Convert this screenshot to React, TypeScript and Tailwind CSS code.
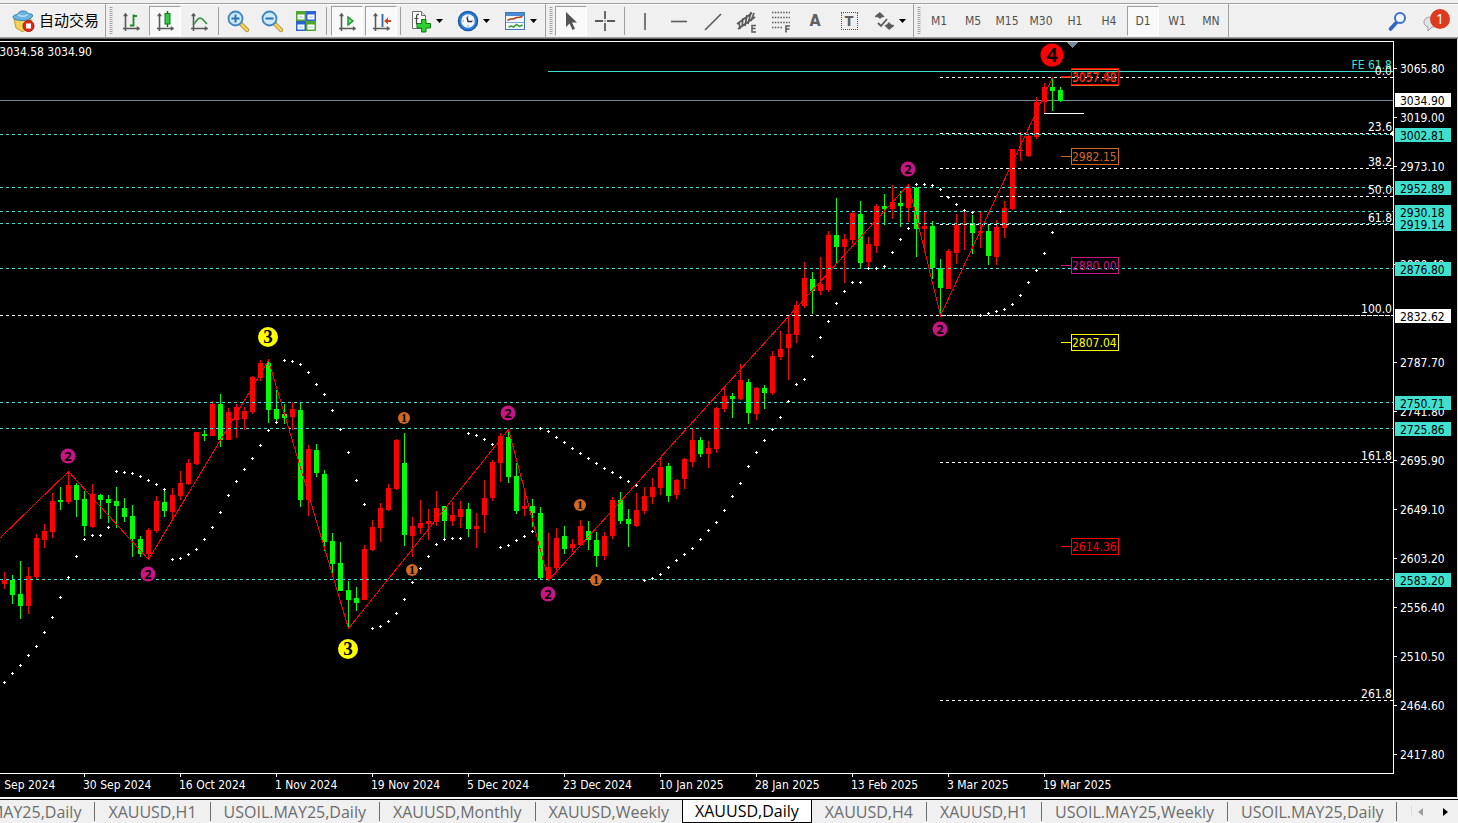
import React from 'react';
import clsx from 'clsx';

type Side = 'u' | 'd';
// high, body top, body bottom, low, direction, parabolic SAR
type Bar = [number, number, number, number, Side, number];

const BARS: Bar[] = [
    [572, 580, 584, 589, 'u', 682], [575, 580, 595, 604, 'd', 673], [561, 594, 606, 619, 'd', 665], [567, 576, 606, 614, 'u', 655],
    [534, 538, 577, 579, 'u', 646], [524, 531, 540, 548, 'u', 632], [493, 501, 532, 538, 'u', 617], [487, 500, 502, 510, 'd', 597],
    [471, 485, 502, 504, 'u', 577], [483, 485, 500, 517, 'd', 556], [491, 499, 526, 536, 'd', 539], [484, 494, 527, 528, 'u', 535],
    [494, 495, 500, 519, 'd', 535], [495, 499, 503, 523, 'd', 527], [487, 501, 506, 528, 'd', 471], [498, 508, 517, 522, 'd', 472],
    [505, 516, 539, 557, 'd', 473], [536, 539, 554, 557, 'd', 476], [528, 530, 554, 559, 'u', 480], [496, 501, 531, 533, 'u', 484],
    [490, 502, 511, 517, 'd', 489], [488, 495, 512, 521, 'u', 559], [471, 483, 496, 500, 'u', 558], [459, 463, 484, 485, 'u', 554],
    [432, 432, 464, 465, 'u', 549], [430, 434, 436, 441, 'd', 539], [401, 404, 436, 436, 'u', 527], [394, 404, 440, 447, 'd', 512],
    [408, 412, 440, 440, 'u', 495], [404, 407, 420, 438, 'u', 481], [407, 411, 419, 430, 'u', 469], [376, 377, 412, 414, 'u', 458],
    [360, 363, 378, 381, 'u', 445], [361, 363, 410, 423, 'd', 430], [390, 409, 419, 424, 'd', 422], [404, 414, 418, 424, 'd', 360],
    [402, 409, 417, 430, 'u', 361], [402, 410, 500, 507, 'd', 364], [445, 449, 500, 516, 'u', 372], [444, 450, 473, 477, 'd', 384],
    [470, 474, 542, 551, 'd', 394], [533, 541, 564, 573, 'd', 410], [542, 563, 591, 591, 'd', 429], [581, 590, 600, 628, 'd', 452],
    [587, 598, 603, 611, 'd', 480], [545, 549, 600, 600, 'u', 504], [520, 527, 550, 551, 'u', 628], [503, 508, 528, 542, 'u', 626],
    [484, 488, 510, 511, 'u', 621], [439, 440, 489, 490, 'u', 613], [433, 463, 535, 546, 'd', 599], [517, 526, 536, 557, 'u', 582],
    [500, 523, 528, 534, 'u', 568], [509, 521, 524, 540, 'u', 556], [491, 508, 522, 526, 'u', 544], [506, 506, 521, 539, 'd', 539],
    [502, 515, 521, 526, 'u', 538], [501, 509, 517, 528, 'u', 538], [503, 509, 529, 537, 'd', 433], [513, 526, 529, 548, 'u', 435],
    [480, 498, 515, 533, 'u', 439], [460, 462, 498, 501, 'u', 444], [433, 436, 463, 482, 'u', 547], [429, 437, 477, 483, 'd', 545],
    [463, 476, 511, 514, 'd', 540], [488, 506, 509, 516, 'u', 536], [499, 506, 513, 527, 'd', 531], [507, 513, 578, 579, 'd', 428],
    [533, 567, 579, 580, 'u', 431], [528, 538, 568, 573, 'u', 437], [526, 536, 549, 554, 'd', 442], [539, 544, 548, 552, 'u', 448],
    [520, 526, 545, 546, 'u', 453], [521, 531, 540, 550, 'd', 458], [532, 540, 556, 567, 'd', 463], [532, 536, 556, 560, 'u', 468],
    [497, 500, 536, 539, 'u', 472], [492, 500, 521, 524, 'd', 477], [509, 519, 524, 547, 'd', 481], [493, 510, 526, 527, 'u', 485],
    [487, 496, 511, 514, 'u', 580], [478, 487, 497, 504, 'u', 578], [457, 467, 488, 495, 'u', 574], [463, 466, 496, 502, 'd', 567],
    [479, 480, 495, 499, 'u', 560], [458, 459, 479, 489, 'u', 554], [429, 440, 462, 467, 'u', 548], [437, 440, 454, 457, 'd', 539],
    [441, 448, 454, 468, 'u', 530], [407, 408, 449, 453, 'u', 522], [388, 396, 409, 412, 'u', 510], [393, 396, 399, 418, 'd', 496],
    [364, 380, 399, 400, 'u', 483], [379, 382, 413, 424, 'd', 466], [387, 388, 414, 420, 'u', 452], [385, 388, 393, 409, 'd', 440],
    [351, 356, 393, 395, 'u', 429], [331, 349, 357, 360, 'u', 417], [315, 334, 348, 380, 'u', 401], [301, 305, 335, 343, 'u', 384],
    [262, 278, 306, 308, 'u', 379], [272, 279, 291, 314, 'd', 356], [257, 284, 291, 295, 'u', 337], [231, 235, 290, 292, 'u', 321],
    [198, 235, 247, 263, 'd', 303], [234, 239, 247, 283, 'u', 291], [212, 213, 240, 244, 'u', 282], [201, 214, 263, 268, 'd', 282],
    [237, 244, 262, 269, 'u', 268], [204, 206, 246, 253, 'u', 268], [194, 206, 209, 225, 'd', 266], [185, 202, 209, 219, 'u', 252],
    [191, 203, 206, 227, 'd', 239], [184, 188, 208, 222, 'u', 228], [187, 188, 229, 257, 'd', 184], [212, 226, 229, 253, 'u', 184],
    [221, 226, 268, 279, 'd', 185], [259, 268, 288, 315, 'd', 189], [249, 251, 289, 289, 'u', 197], [214, 225, 253, 264, 'u', 204],
    [210, 224, 225, 250, 'u', 210], [215, 223, 233, 254, 'd', 212], [212, 231, 233, 248, 'u', 315], [225, 231, 256, 265, 'd', 313],
    [220, 227, 257, 265, 'u', 311], [201, 208, 228, 238, 'u', 309], [149, 149, 209, 210, 'u', 304], [132, 150, 151, 161, 'u', 295],
    [135, 136, 156, 157, 'u', 282], [97, 102, 137, 139, 'u', 270], [83, 87, 102, 113, 'u', 253], [79, 87, 91, 111, 'd', 232],
    [87, 90, 101, 102, 'd', 211],
];

const ZIGZAG = '-1,538 68,471 148,559 268,360 348,628 508,429 548,580 908,184 940,315 1052,77';

const TEAL_LEVELS = [134, 187, 211, 223, 268, 402, 428, 579];

const FIBS: [number, string][] = [
    [77, '0.0'], [133, '23.6'], [168, '38.2'], [196, '50.0'], [224, '61.8'], [315, '100.0'], [462, '161.8'], [700, '261.8'],
];

const TARGETS: [number, string, string][] = [
    [77, '3057.48', '#d2691e'],
    [76, '3057.62', '#ff0000'],
    [156, '2982.15', '#d2691e'],
    [265, '2880.00', '#c71585'],
    [342, '2807.04', '#ffff00'],
    [546, '2614.36', '#ff0000'],
];

// x, y, wave degree
const WAVES: [number, number, number][] = [
    [68, 456, 2], [148, 574, 2], [508, 413, 2], [548, 594, 2], [908, 169, 2], [940, 329, 2],
    [268, 337, 3], [348, 649, 3], [1052, 55, 4],
    [404, 418, 1], [412, 570, 1], [580, 505, 1], [596, 580, 1],
];

const SANS = "font-['Noto_Sans',sans-serif] font-bold";
const SERIF = "font-['Liberation_Serif',serif] font-bold";

const WAVE_STYLE: Record<number, { r: number; fill: string; size: number; dy: number; font: string }> = {
    1: { r: 6, fill: '#d2691e', size: 12, dy: 4, font: SERIF },
    2: { r: 7.5, fill: '#c71585', size: 13, dy: 5, font: SANS },
    3: { r: 10, fill: '#ffff00', size: 19, dy: 6, font: SERIF },
    4: { r: 11.5, fill: '#ff0000', size: 20, dy: 7, font: SANS },
};

const PRICES: [number, string][] = [
    [69, '3065.80'], [118, '3019.00'], [167, '2973.10'], [265, '2880.40'], [363, '2787.70'], [412, '2741.80'], [461, '2695.90'],
    [510, '2649.10'], [559, '2603.20'], [608, '2556.40'], [657, '2510.50'], [706, '2464.60'], [755, '2417.80'],
];

const TAGS: [number, string, string][] = [
    [100, '3034.90', '#ffffff'], [135, '3002.81', '#40e0d0'], [188, '2952.89', '#40e0d0'], [212, '2930.18', '#40e0d0'],
    [224, '2919.14', '#40e0d0'], [269, '2876.80', '#40e0d0'], [316, '2832.62', '#ffffff'], [403, '2750.71', '#40e0d0'],
    [429, '2725.86', '#40e0d0'], [580, '2583.20', '#40e0d0'],
];

const DATES = [
    '12 Sep 2024', '30 Sep 2024', '16 Oct 2024', '1 Nov 2024', '19 Nov 2024', '5 Dec 2024', '23 Dec 2024', '10 Jan 2025',
    '28 Jan 2025', '13 Feb 2025', '3 Mar 2025', '19 Mar 2025',
];

const TABS = [
    'USOIL.MAY25,Daily', 'XAUUSD,H1', 'USOIL.MAY25,Daily', 'XAUUSD,Monthly', 'XAUUSD,Weekly', 'XAUUSD,Daily', 'XAUUSD,H4',
    'XAUUSD,H1', 'USOIL.MAY25,Weekly', 'USOIL.MAY25,Daily', 'USOIL.MAY25,H4',
];
const ACTIVE_TAB = 5;

const TIMEFRAMES = ['M1', 'M5', 'M15', 'M30', 'H1', 'H4', 'D1', 'W1', 'MN'];

/* ---------- toolbar icons ---------- */

function Icon({ children }: { children: React.ReactNode }) {
    return (
        <svg width="24" height="24" viewBox="0 0 24 24" fill="none" className="shrink-0">
            {children}
        </svg>
    );
}

function Axes() {
    return (
        <g stroke="#5a5a5a">
            <path d="M6.5 5v17M4 19.500h16" strokeWidth="1.600" />
            <path d="M4.500 7l2-3 2 3zM18 17.500l3 2-3 2z" fill="#5a5a5a" strokeWidth="0.500" />
        </g>
    );
}

const BarChartIcon = () => (
    <Icon>
        <Axes />
        <path d="M14.500 5.500v12M11 16.500h3.500M14.500 7h3.500" stroke="#1f8a2b" strokeWidth="1.800" />
    </Icon>
);

const CandleIcon = () => (
    <Icon>
        <Axes />
        <path d="M14.500 2v16" stroke="#0a6b16" strokeWidth="1.400" />
        <rect x="12" y="4.500" width="5" height="10.500" fill="#35c845" stroke="#0d7a1c" />
    </Icon>
);

const LineChartIcon = () => (
    <Icon>
        <Axes />
        <path d="M6 16c3-2 4-7 7-7 2.500 0 4 3 7 6" stroke="#2f8f3a" strokeWidth="1.600" />
    </Icon>
);

function ZoomIcon({ plus }: { plus?: boolean }) {
    return (
        <Icon>
            <path d="M15 15l6 6" stroke="#a98a3a" strokeWidth="4.200" strokeLinecap="round" />
            <path d="M15.500 15.500l5.500 5.500" stroke="#f7d257" strokeWidth="2.600" strokeLinecap="round" />
            <circle cx="9.500" cy="9.500" r="7" fill="#cfe8fb" stroke="#3d86c4" strokeWidth="1.800" />
            <path d="M5.500 9.500h8" stroke="#2b74b4" strokeWidth="2" />
            {plus && <path d="M9.500 5.500v8" stroke="#2b74b4" strokeWidth="2" />}
        </Icon>
    );
}

const TileIcon = () => (
    <Icon>
        <rect x="2" y="2" width="10" height="10" fill="#4fa62f" />
        <rect x="12" y="2" width="10" height="10" fill="#2d62cf" />
        <rect x="2" y="12" width="10" height="10" fill="#2d62cf" />
        <rect x="12" y="12" width="10" height="10" fill="#4fa62f" />
        <path d="M3.500 5.500h7v5h-7zM13.500 5.500h7v5h-7zM3.500 15.500h7v5h-7zM13.500 15.500h7v5h-7z" fill="#fff" />
        <path d="M5 8h4M15 8h4M5 18h4M15 18h4" stroke="#9cc0e6" />
    </Icon>
);

const AutoScrollIcon = () => (
    <Icon>
        <Axes />
        <path d="M13 8v8l5-4z" fill="#7be07f" stroke="#17962a" strokeWidth="1.400" />
    </Icon>
);

const ShiftIcon = () => (
    <Icon>
        <Axes />
        <path d="M13.500 5v13" stroke="#2a6aa8" strokeWidth="1.800" />
        <path d="M15 12l4-3.500v2.500h3v2h-3v2.500z" fill="#d5441a" />
    </Icon>
);

const IndicatorIcon = () => (
    <Icon>
        <path d="M3.500 2.500h9l4 4v13h-13z" fill="#fafafa" stroke="#707070" />
        <path d="M12.500 2.500v4h4" stroke="#707070" fill="#ddd" />
        <path d="M10 5.500c-2.500-.5-2.500 1-2.500 3v7M5.500 9.500h4" stroke="#444" strokeWidth="1.200" />
        <path d="M12.500 10.500h4.500v4h4.500v4.500h-4.500v4h-4.500v-4h-4.500v-4.500h4.500z" fill="#2fcf2f" stroke="#0d7a16" />
    </Icon>
);

const ClockIcon = () => (
    <Icon>
        <circle cx="12" cy="12" r="9.500" fill="#2f7fdc" stroke="#1c56a8" strokeWidth="1.500" />
        <circle cx="12" cy="12" r="6.800" fill="#f4f7fb" />
        <path d="M12 6.500v1.500M12 16v1.500M6.500 12h1.500M16 12h1.500" stroke="#888" />
        <path d="M11 8l1 4.500h4" stroke="#333" strokeWidth="1.400" />
    </Icon>
);

const TemplateIcon = () => (
    <Icon>
        <rect x="2.500" y="3.500" width="19" height="17" fill="#f6f9fc" stroke="#3f77b8" />
        <path d="M3 4h18v3h-18z" fill="#4b8bd4" />
        <path d="M3 13.500h18" stroke="#7aa3d0" />
        <path d="M4.500 11.500l3-1.500h3l3-1.500h2l4-1" stroke="#b03a1c" strokeWidth="1.500" />
        <path d="M5.500 18l3-1 2 1 3-2.500 3 2 3-1.500" stroke="#2c9a35" strokeWidth="1.500" />
    </Icon>
);

const CursorIcon = () => (
    <Icon>
        <path d="M7 3v15l3.500-3.500 3 6.500 2.500-1.200-3-6.300h5z" fill="#555" />
    </Icon>
);

const CrosshairIcon = () => (
    <Icon>
        <path d="M12 2v8M12 14v8M2 12h8M14 12h8M12 11.500v1" stroke="#5a5a5a" strokeWidth="1.800" />
    </Icon>
);

const VLineIcon = () => (
    <Icon>
        <path d="M12 4v17" stroke="#5a5a5a" strokeWidth="1.600" />
    </Icon>
);

const HLineIcon = () => (
    <Icon>
        <path d="M4 12.500h16" stroke="#5a5a5a" strokeWidth="1.600" />
    </Icon>
);

const TrendIcon = () => (
    <Icon>
        <path d="M4 21L20 5" stroke="#5a5a5a" strokeWidth="1.600" />
    </Icon>
);

const ChannelIcon = () => (
    <Icon>
        <path d="M2 15L17 4M3 20L20 8M4 13l1 7M8 9l-1 9M12 6l-2 11M16 3l-3 12M19 4l-3 8" stroke="#5a5a5a" strokeWidth="1.700" />
        <path d="M21 16.500h-4v6.500h4M17 19.500h3.500" stroke="#5a5a5a" strokeWidth="1.500" />
    </Icon>
);

const FiboIcon = () => (
    <Icon>
        <path d="M3 3.500h18M3 8.500h18M3 13.500h18M3 18.500h11" stroke="#5a5a5a" strokeWidth="1.500" strokeDasharray="1.500 1.300" />
        <path d="M21 17h-4v6.500M17 20h3.500" stroke="#5a5a5a" strokeWidth="1.600" />
    </Icon>
);

const ShapesIcon = () => (
    <Icon>
        <path d="M8 3.500l4 4-2.500.5-1.500 1.500-1.500-1.500-3.500-.5zM17 20.500l-4-4 2-.5 2-2.500 2 2.500 3 .5z" fill="#5a5a5a" stroke="#5a5a5a" />
        <path d="M6 14l3 3 6-7" stroke="#5a5a5a" strokeWidth="1.800" />
    </Icon>
);

const ExpertIcon = () => (
    <Icon>
        <path d="M3 10l2 9 6 3.500 7-2 3-9.500z" fill="#f3d258" stroke="#c29a28" />
        <path d="M2 8c0-2 4-2.500 5-3 1-2.500 3-3 5-3s4 .5 5 2.500c2 .5 4 0 4.500 1.500.5 3-4 5.500-9.500 5.500s-10-1-10-3.500z" fill="#6cb4e0" stroke="#3b83b5" />
        <path d="M7 6c3 1.500 7 1.500 10-.5" stroke="#b8def5" strokeWidth="1.500" />
        <circle cx="17.500" cy="17" r="5.500" fill="#dd2a1b" stroke="#a8180c" />
        <rect x="15" y="14.500" width="5" height="5" fill="#fff" />
    </Icon>
);

const SearchIcon = () => (
    <Icon>
        <path d="M10 14l-5.500 6" stroke="#2f62c4" strokeWidth="3.600" strokeLinecap="round" />
        <circle cx="14" cy="9" r="5" fill="#f4f8ff" stroke="#3c6fd0" strokeWidth="2" />
    </Icon>
);

/* ---------- toolbar pieces ---------- */

const Caret = () => (
    <svg width="7" height="4" viewBox="0 0 7 4" className="shrink-0">
        <path d="M0 0h7L3.500 4z" fill="#000" />
    </svg>
);

const Grip = () => (
    <svg width="4" height="27" viewBox="0 0 4 27" className="shrink-0">
        <path d="M2 0v27" stroke="#a0a0a0" strokeWidth="3" strokeDasharray="1 1" />
    </svg>
);

interface ToolProps {
    label: string;
    active?: boolean;
    menu?: boolean;
    children: React.ReactNode;
}

function Tool({ label, active, menu, children }: ToolProps) {
    return (
        <button
            aria-label={label}
            className={clsx(
                'flex h-[30px] shrink-0 items-center border pt-px text-[12px] text-[#505050]',
                active ? 'border-t-[#a0a0a0] border-r-white border-b-white border-l-[#a0a0a0] bg-[#f9f9f9]' : 'border-transparent',
                menu ? 'w-[39px]' : 'w-8 justify-center'
            )}
        >
            {menu ? <span className="flex w-[31px] shrink-0 justify-center">{children}</span> : children}
            {menu && <Caret />}
        </button>
    );
}

const Divider = () => <span className="ml-auto h-7 w-px shrink-0 bg-[#a0a0a0]" />;

function Toolbar() {
    return (
        <header className="shrink-0 bg-[#f0f0f0] pt-[3px] font-['DejaVu_Sans_Condensed','Noto_Sans',sans-serif]">
            <div className="flex h-[35px] items-stretch overflow-hidden border-t border-b border-t-[#a0a0a0] border-b-[#a0a0a0] shadow-[inset_0_1px_0_#fff]">
                <div className="flex w-[106px] shrink-0 items-center border-r border-[#a0a0a0] pl-[11px]">
                    <button className="flex items-center gap-[4px] font-['Noto_Sans_CJK_SC',sans-serif] text-[15px] whitespace-nowrap text-black">
                        <ExpertIcon />
                        自动交易
                    </button>
                </div>
                <div className="flex w-[113px] shrink-0 items-center gap-[2px] pl-[3px]">
                    <Grip />
                    <Tool label="Bar chart"><BarChartIcon /></Tool>
                    <Tool label="Candlesticks" active><CandleIcon /></Tool>
                    <Tool label="Line chart"><LineChartIcon /></Tool>
                    <Divider />
                </div>
                <div className="flex w-[108px] shrink-0 items-center gap-[2px] pl-[3px]">
                    <Tool label="Zoom in"><ZoomIcon plus /></Tool>
                    <Tool label="Zoom out"><ZoomIcon /></Tool>
                    <Tool label="Tile windows"><TileIcon /></Tool>
                    <Divider />
                </div>
                <div className="flex w-[74px] shrink-0 items-center gap-[2px] pl-[4px]">
                    <Tool label="Auto scroll" active><AutoScrollIcon /></Tool>
                    <Tool label="Chart shift" active><ShiftIcon /></Tool>
                    <Divider />
                </div>
                <div className="flex w-[145px] shrink-0 items-center gap-2 border-r border-[#a0a0a0] pl-[3px]">
                    <Tool label="Indicators" menu><IndicatorIcon /></Tool>
                    <Tool label="Periods" menu><ClockIcon /></Tool>
                    <Tool label="Templates" menu><TemplateIcon /></Tool>
                </div>
                <div className="flex w-[79px] shrink-0 items-center gap-[2px] pl-[3px]">
                    <Grip />
                    <Tool label="Cursor" active><CursorIcon /></Tool>
                    <Tool label="Crosshair"><CrosshairIcon /></Tool>
                    <Divider />
                </div>
                <div className="flex w-[289px] shrink-0 items-center gap-[2px] border-r border-[#a0a0a0] pl-[4px]">
                    <Tool label="Vertical line"><VLineIcon /></Tool>
                    <Tool label="Horizontal line"><HLineIcon /></Tool>
                    <Tool label="Trendline"><TrendIcon /></Tool>
                    <Tool label="Equidistant channel"><ChannelIcon /></Tool>
                    <Tool label="Fibonacci retracement"><FiboIcon /></Tool>
                    <Tool label="Text"><span className="text-[16px] font-bold text-[#606060]">A</span></Tool>
                    <Tool label="Text label">
                        <span className="flex h-[18px] w-[17px] items-center justify-center border border-dotted border-[#505050] text-[14px] font-bold text-[#606060]">T</span>
                    </Tool>
                    <Tool label="Arrows" menu><ShapesIcon /></Tool>
                </div>
                <div className="flex w-[315px] shrink-0 items-center gap-[2px] border-r border-[#a0a0a0] pl-[3px]">
                    <Grip />
                    {TIMEFRAMES.map((tf) => (
                        <Tool key={tf} label={tf} active={tf === 'D1'}>{tf}</Tool>
                    ))}
                </div>
                <div className="ml-auto flex items-center gap-3 pr-2">
                    <button aria-label="Search"><SearchIcon /></button>
                    <button aria-label="Notifications" className="relative h-6 w-7">
                        <svg width="20" height="18" viewBox="0 0 20 18" className="absolute bottom-0 left-0">
                            <path d="M9 2c5 0 8 2 8 5s-3 5-7 5l-4 4 0-4c-3-1-4-3-4-5 0-3 3-5 7-5z" fill="#e4e4e8" stroke="#9a9aa2" />
                        </svg>
                        <span className="absolute top-0 right-0 flex h-5 w-5 items-center justify-center rounded-full bg-[#dd3a20] font-['Open_Sans',sans-serif] text-[14px] text-white">1</span>
                    </button>
                </div>
            </div>
            <div className="h-px bg-[#696969]" />
        </header>
    );
}

/* ---------- chart ---------- */

const ORIGIN = 'translate(0 -42)';

function Candle({ bar, x }: { bar: Bar; x: number }) {
    const [high, top, bottom, low, side] = bar;
    return (
        <g fill={side === 'u' ? '#ff0000' : '#00ff00'}>
            <rect x={x} y={high} width="1" height={low - high} />
            <rect x={x - 2} y={top} width="5" height={bottom - top} />
        </g>
    );
}

function Plot() {
    return (
        <svg className="block h-[731px] w-full text-[12px]" shapeRendering="crispEdges">
            <g transform={ORIGIN}>
                <rect x="0" y="100" width="100%" height="1" fill="#778899" />
                <rect x="548" y="71" width="100%" height="1" fill="#40e0d0" />

                {BARS.map((bar, i) => <Candle key={i} bar={bar} x={4 + i * 8} />)}

                <g transform="translate(0 0.5)" strokeDasharray="3 3">
                    {TEAL_LEVELS.map((y) => <line key={y} x1="0" x2="100%" y1={y} y2={y} stroke="#40e0d0" />)}
                    <line x1="0" x2="100%" y1="315" y2="315" stroke="#fff" />
                    {FIBS.map(([y]) => (
                        <line key={y} x1={y === 315 ? 941 : 940} x2="100%" y1={y} y2={y} stroke="#fff" strokeDasharray={y === 315 ? '5 1' : '3 3'} />
                    ))}
                </g>

                <polyline points={ZIGZAG} transform="translate(0.5 0.5)" fill="none" stroke="#ff0000" />

                {BARS.map((bar, i) => (
                    <path key={i} d={`M${3 + i * 8} ${bar[5]}h3v1h-3zM${4 + i * 8} ${bar[5] - 1}h1v3h-1z`} fill="#fff" />
                ))}

                <rect x="1044" y="113" width="40" height="1" fill="#fff" />
                <path d="M1067 42h11l-5.500 6z" fill="#778899" />

                {TARGETS.map(([y, price, color]) => (
                    <g key={price}>
                        <rect x="1061" y={y} width="10" height="1" fill={color} />
                        <rect x="1071.5" y={y - 7.5} width="47" height="16" fill="none" stroke={color} />
                        <text x="1072" y={y + 5} fill={color}>{price}</text>
                    </g>
                ))}

                {WAVES.map(([x, y, n]) => {
                    const s = WAVE_STYLE[n];
                    return (
                        <g key={`${x}-${y}`} shapeRendering="geometricPrecision">
                            <circle cx={x} cy={y} r={s.r} fill={s.fill} />
                            <text x={x} y={y + s.dy} fontSize={s.size} textAnchor="middle" fill="#000" className={s.font}>{n}</text>
                        </g>
                    );
                })}

                <text x="92" y="56" textAnchor="end" fill="#fff">3034.58 3034.90</text>
            </g>

            {/* level captions hang off the right edge */}
            <svg x="100%" overflow="visible">
                <g transform={ORIGIN} textAnchor="end" fill="#fff">
                    <text x="-1" y="69" fill="#40e0d0">FE 61.8</text>
                    {FIBS.map(([y, label]) => <text key={label} x="-1" y={y - 2}>{label}</text>)}
                    <path d="M-4 134l4-3v5z" />
                </g>
            </svg>
        </svg>
    );
}

function PriceAxis() {
    return (
        <svg className="mt-px block h-[731px] w-[63px] shrink-0 text-[12px]" shapeRendering="crispEdges">
            <g transform={ORIGIN}>
                {PRICES.map(([y, price]) => (
                    <g key={price} fill="#fff">
                        <rect x="0" y={y - 1} width="3" height="1" />
                        <text x="6" y={y + 4}>{price}</text>
                    </g>
                ))}
                {TAGS.map(([y, price, color]) => (
                    <g key={price}>
                        <rect x="1" y={y - 7} width="56" height="14" fill={color} />
                        <text x="6" y={y + 5} fill="#000">{price}</text>
                    </g>
                ))}
            </g>
        </svg>
    );
}

function TimeAxis() {
    return (
        <svg className="block h-[23px] w-full text-[12px]" fill="#fff" shapeRendering="crispEdges">
            {DATES.map((date, i) => (
                <g key={date}>
                    <rect x={i * 96 - 12} y="0" width="1" height="3" />
                    <text x={i * 96 - 13} y="15">{date}</text>
                </g>
            ))}
        </svg>
    );
}

/* ---------- bottom tabs ---------- */

function ChartTabs() {
    return (
        <nav className="flex shrink-0 border-t border-black bg-[#f0f0f0] font-['Open_Sans',sans-serif] text-[16px] text-[#6d6d6d]">
            <div className="flex h-[23px] min-w-0 flex-1 overflow-hidden">
                <div className="-ml-[74px] flex items-center">
                    {TABS.map((tab, i) => (
                        <button
                            key={i}
                            className={clsx(
                                'flex shrink-0 items-center whitespace-nowrap',
                                i === ACTIVE_TAB
                                    ? 'h-[23px] border-r border-b border-l border-black bg-white px-3 text-black'
                                    : 'h-[19px] px-[13px]',
                                i !== ACTIVE_TAB && i !== ACTIVE_TAB - 1 && 'border-r border-[#6d6d6d]'
                            )}
                        >
                            {tab}
                        </button>
                    ))}
                </div>
            </div>
            <div className="flex shrink-0 items-center gap-5 pr-[10px] pl-[6px]">
                <button aria-label="Scroll left">
                    <svg width="5" height="8" viewBox="0 0 5 8"><path d="M5 0v8L0 4z" fill="#a0a0a0" /></svg>
                </button>
                <button aria-label="Scroll right">
                    <svg width="5" height="8" viewBox="0 0 5 8"><path d="M0 0v8l5-4z" fill="#000" /></svg>
                </button>
            </div>
        </nav>
    );
}

export default function App() {
    return (
        <div className="flex min-h-screen flex-col overflow-hidden bg-black">
            <Toolbar />
            <main className="flex-1 border-r border-[#e3e3e3] bg-black pt-[2px] font-['DejaVu_Sans_Condensed','Noto_Sans',sans-serif]">
                <div className="flex">
                    <div className="min-w-0 flex-1 border-t border-r border-b border-white">
                        <Plot />
                    </div>
                    <PriceAxis />
                </div>
                <TimeAxis />
            </main>
            <div className="h-[2px] shrink-0 bg-[#f5f5f5]" />
            <ChartTabs />
        </div>
    );
}
